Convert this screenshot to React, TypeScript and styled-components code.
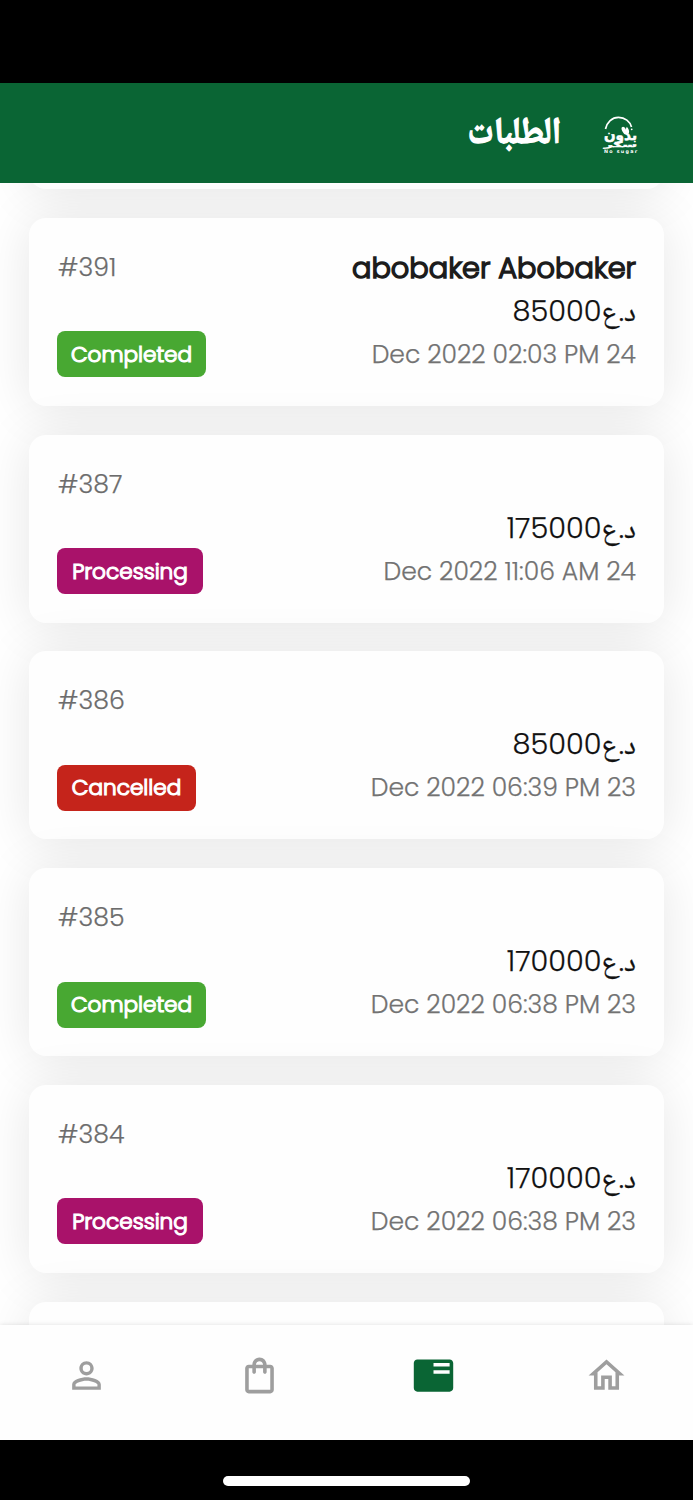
import React from "react";
import styled, { createGlobalStyle } from "styled-components";

const latin = `Poppins, Inter, "Noto Naskh Arabic", "Noto Sans Arabic", Amiri, "DejaVu Sans", sans-serif`;

const GlobalStyle = createGlobalStyle`
  * { box-sizing: border-box; }
  body { margin: 0; background: #000; font-family: ${latin}; font-weight: 300; }
`;

const Screen = styled.div`
  display: flex;
  flex-direction: column;
  width: 693px;
  height: 1500px;
  overflow: hidden;
  background: #000;
`;

const Header = styled.header`
  display: flex;
  align-items: center;
  direction: rtl;
  flex: none;
  height: 100px;
  margin-top: 83px;
  padding: 0 55px 0 0;
  gap: 42px;
  background: #0a6534;
`;

const Logo = styled.svg`
  display: block;
  flex: none;
  width: 35px;
  height: 38px;
  margin-top: 4px;
  overflow: visible;
`;

const Title = styled.h1`
  margin: 0;
  padding-top: 3px;
  color: #fff;
  font: bold 37px/44px "Noto Naskh Arabic", "Noto Sans Arabic", Amiri, "DejaVu Sans", sans-serif;
  white-space: nowrap;
  -webkit-text-stroke: 1.3px currentColor;
  transform: scaleX(0.89);
  transform-origin: right center;
`;

const List = styled.main`
  display: flex;
  flex-direction: column;
  gap: 28.8px;
  flex: none;
  height: 1142px;
  padding: 0 29px;
  overflow: hidden;
  background: #fff;
`;

const Card = styled.article`
  display: flex;
  justify-content: space-between;
  flex: none;
  height: 188px;
  padding: 30px 28px 28.5px;
  border-radius: 17px;
  background: #fefefe;
  box-shadow: 0 3px 52px rgba(0, 0, 0, 0.1);
  &:first-child { margin-top: -182.1px; }
`;

const Side = styled.div`
  display: flex;
  flex-direction: column;
  justify-content: space-between;
  align-items: flex-start;
`;

const OrderId = styled.span`
  padding: 1px 0 0 1px;
  color: #6c6c6c;
  font-size: 25.2px;
  line-height: 38px;
  -webkit-text-stroke: 0.25px currentColor;
`;

const badgeColors = { Completed: "#48a832", Processing: "#a9126a", Cancelled: "#c5241b" };
const badgeWidths = { Completed: 149, Processing: 146, Cancelled: 139 };
type Status = keyof typeof badgeColors;

const Badge = styled.span<{ $status: Status }>`
  display: flex;
  align-items: center;
  justify-content: center;
  width: ${(p) => badgeWidths[p.$status]}px;
  height: 46px;
  border-radius: 8px;
  background: ${(p) => badgeColors[p.$status]};
  color: #fff;
  font-size: 21.6px;
  -webkit-text-stroke: 1.2px currentColor;
`;

const Details = styled.div`
  display: flex;
  flex-direction: column;
  direction: rtl;
  align-items: flex-start;
  white-space: nowrap;
`;

const Name = styled.span`
  height: 42px;
  color: #1c1c1c;
  font-size: 28.8px;
  line-height: 41px;
  -webkit-text-stroke: 1.5px currentColor;
`;

const Price = styled.span`
  height: 43px;
  color: #111;
  font-size: 28.8px;
  line-height: 43px;
  -webkit-text-stroke: 0.25px currentColor;
`;

const OrderDate = styled.span`
  height: 43px;
  color: #727272;
  font-size: 25.1px;
  line-height: 43px;
  -webkit-text-stroke: 0.25px currentColor;
`;

const Nav = styled.nav`
  display: grid;
  grid-template-columns: repeat(4, 1fr);
  flex: none;
  height: 115px;
  padding-top: 29px;
  justify-items: center;
  background: #fefefe;
  box-shadow: 0 0 5px rgba(0, 0, 0, 0.12);
  position: relative;
`;

const NavIcon = styled.svg<{ $active?: boolean }>`
  width: 43px;
  height: 43px;
  fill: ${(p) => (p.$active ? "#0a6534" : "#9e9e9e")};
`;

const HomeArea = styled.footer`
  display: flex;
  justify-content: center;
  height: 60px;
  padding-top: 36px;
`;

const HomeBar = styled.div`
  width: 247px;
  height: 10px;
  border-radius: 5px;
  background: #fff;
`;

interface Order {
  id: string;
  name?: string;
  price: string;
  date: string;
  status: Status;
}

const orders: Order[] = [
  { id: "391", name: "abobaker Abobaker", price: "85000", date: "24 Dec 2022 02:03 PM", status: "Completed" },
  { id: "387", price: "175000", date: "24 Dec 2022 11:06 AM", status: "Processing" },
  { id: "386", price: "85000", date: "23 Dec 2022 06:39 PM", status: "Cancelled" },
  { id: "385", price: "170000", date: "23 Dec 2022 06:38 PM", status: "Completed" },
  { id: "384", price: "170000", date: "23 Dec 2022 06:38 PM", status: "Processing" },
];

const navPaths = [
  "M12 5.9a2.1 2.1 0 1 1 0 4.2 2.1 2.1 0 0 1 0-4.2m0 9c2.97 0 6.1 1.46 6.1 2.1v1.1H5.9V17c0-.64 3.13-2.1 6.1-2.1M12 4C9.79 4 8 5.79 8 8s1.79 4 4 4 4-1.79 4-4-1.79-4-4-4zm0 9c-2.67 0-8 1.34-8 4v3h16v-3c0-2.66-5.33-4-8-4z",
  "M18 6h-2c0-2.21-1.79-4-4-4S8 3.79 8 6H6c-1.1 0-2 .9-2 2v12c0 1.1.9 2 2 2h12c1.1 0 2-.9 2-2V8c0-1.1-.9-2-2-2zm-6-2c1.1 0 2 .9 2 2h-4c0-1.1.9-2 2-2zm6 16H6V8h2v2c0 .55.45 1 1 1s1-.45 1-1V8h4v2c0 .55.45 1 1 1s1-.45 1-1V8h2v12z",
  "M3 3h18c1.1 0 2 .9 2 2v14c0 1.1-.9 2-2 2H3c-1.1 0-2-.9-2-2V5c0-1.1.9-2 2-2zm9 2v2h9V5h-9zm0 4v2h9V9h-9z",
  "M12 5.69l5 4.5V18h-2v-6H9v6H7v-7.81l5-4.5M12 3L2 12h3v8h6v-6h2v6h6v-8h3L12 3z",
];

function BrandLogo() {
  return (
    <Logo viewBox="0 0 35 38" fill="#fff" fontFamily="DejaVu Sans" fontWeight="bold">
      <path d="M2.500 13C4 6 9 1.400 15.500 1.400S27 5.500 28.500 11" fill="none" stroke="#fff" strokeWidth="1.700" />
      <circle cx="28.700" cy="13.300" r=".9" />
      <path d="M18.500 12.500c0-1.500 1.500-2.500 2.800-1.300 1 .6 1.300 1.500 1.200 2.500l1.300-3c1.800 2 3 4.500 2 6.800-1.500 1.800-4.300 1.500-5.300-.5-.8-1.400-2-2.500-2-4.500z" />
      <text x="1" y="23.500" fontSize="14" direction="ltr" textLength="33" lengthAdjust="spacingAndGlyphs" stroke="#fff" strokeWidth=".5">بدون</text>
      <text x="1" y="31.300" fontSize="7" direction="ltr" textLength="33" lengthAdjust="spacingAndGlyphs" stroke="#fff" strokeWidth=".4">سكر</text>
      <text x="1" y="37.300" fontSize="4.800" direction="ltr" textLength="33">No sugar</text>
    </Logo>
  );
}

export default function App() {
  return (
    <Screen>
      <GlobalStyle />
      <Header>
        <BrandLogo />
        <Title>الطلبات</Title>
      </Header>
      <List>
        <Card />
        {orders.map((o) => (
          <Card key={o.id}>
            <Side>
              <OrderId>#{o.id}</OrderId>
              <Badge $status={o.status}>{o.status}</Badge>
            </Side>
            <Details>
              <Name>{o.name}</Name>
              <Price>د.ع{o.price}</Price>
              <OrderDate>{o.date}</OrderDate>
            </Details>
          </Card>
        ))}
        <Card />
      </List>
      <Nav>
        {navPaths.map((d, i) => (
          <NavIcon key={i} viewBox="0 0 24 24" $active={i === 2}>
            <path d={d} fillRule="evenodd" />
          </NavIcon>
        ))}
      </Nav>
      <HomeArea>
        <HomeBar />
      </HomeArea>
    </Screen>
  );
}
